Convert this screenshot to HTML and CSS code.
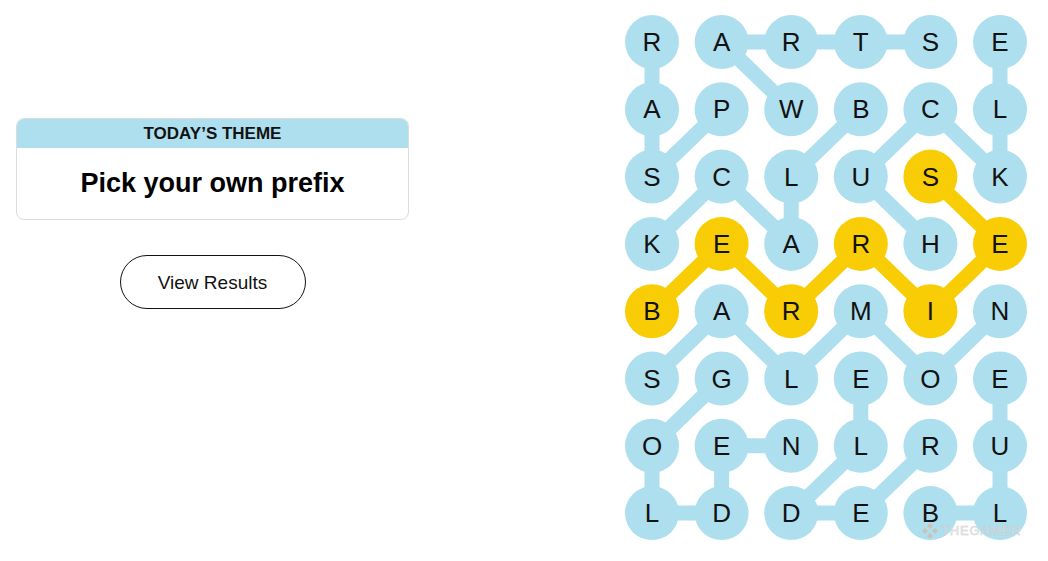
FILE: index.html
```html
<!DOCTYPE html>
<html lang="en">
<head>
<meta charset="utf-8">
<title>Strands</title>
<link rel="stylesheet" href="styles.css">
</head>
<body>
<main class="page">
  <section class="side">
    <div class="theme-card">
      <div class="theme-head">TODAY’S THEME</div>
      <div class="theme-body">Pick your own prefix</div>
    </div>
    <button class="results-btn" type="button">View Results</button>
  </section>
  <section class="board">
    <svg class="grid" width="404" height="540" viewBox="0 0 404 540" xmlns="http://www.w3.org/2000/svg">
      <g class="links">
        <polyline points="305.4,27 235.8,27 166.2,27 96.6,27 166.2,94.3"/>
        <polyline points="27,27 27,94.3 27,161.6 96.6,94.3"/>
        <polyline points="235.8,94.3 166.2,161.6 166.2,228.9 96.6,161.6 27,228.9"/>
        <polyline points="305.4,228.9 235.8,161.6 305.4,94.3 375,161.6 375,94.3 375,27"/>
        <polyline points="27,363.5 96.6,296.2 166.2,363.5 235.8,296.2 305.4,363.5 375,296.2"/>
        <polyline points="96.6,363.5 27,430.8 27,498.1 96.6,498.1 96.6,430.8 166.2,430.8"/>
        <polyline points="235.8,363.5 235.8,430.8 166.2,498.1 235.8,498.1 305.4,430.8"/>
        <polyline points="305.4,498.1 375,498.1 375,430.8 375,363.5"/>
        <polyline class="span" points="27,296.2 96.6,228.9 166.2,296.2 235.8,228.9 305.4,296.2 375,228.9 305.4,161.6"/>
      </g>
      <g class="dots">
        <circle cx="27" cy="27" r="27"/><circle cx="96.6" cy="27" r="27"/><circle cx="166.2" cy="27" r="27"/><circle cx="235.8" cy="27" r="27"/><circle cx="305.4" cy="27" r="27"/><circle cx="375" cy="27" r="27"/>
        <circle cx="27" cy="94.3" r="27"/><circle cx="96.6" cy="94.3" r="27"/><circle cx="166.2" cy="94.3" r="27"/><circle cx="235.8" cy="94.3" r="27"/><circle cx="305.4" cy="94.3" r="27"/><circle cx="375" cy="94.3" r="27"/>
        <circle cx="27" cy="161.6" r="27"/><circle cx="96.6" cy="161.6" r="27"/><circle cx="166.2" cy="161.6" r="27"/><circle cx="235.8" cy="161.6" r="27"/><circle class="span" cx="305.4" cy="161.6" r="27"/><circle cx="375" cy="161.6" r="27"/>
        <circle cx="27" cy="228.9" r="27"/><circle class="span" cx="96.6" cy="228.9" r="27"/><circle cx="166.2" cy="228.9" r="27"/><circle class="span" cx="235.8" cy="228.9" r="27"/><circle cx="305.4" cy="228.9" r="27"/><circle class="span" cx="375" cy="228.9" r="27"/>
        <circle class="span" cx="27" cy="296.2" r="27"/><circle cx="96.6" cy="296.2" r="27"/><circle class="span" cx="166.2" cy="296.2" r="27"/><circle cx="235.8" cy="296.2" r="27"/><circle class="span" cx="305.4" cy="296.2" r="27"/><circle cx="375" cy="296.2" r="27"/>
        <circle cx="27" cy="363.5" r="27"/><circle cx="96.6" cy="363.5" r="27"/><circle cx="166.2" cy="363.5" r="27"/><circle cx="235.8" cy="363.5" r="27"/><circle cx="305.4" cy="363.5" r="27"/><circle cx="375" cy="363.5" r="27"/>
        <circle cx="27" cy="430.8" r="27"/><circle cx="96.6" cy="430.8" r="27"/><circle cx="166.2" cy="430.8" r="27"/><circle cx="235.8" cy="430.8" r="27"/><circle cx="305.4" cy="430.8" r="27"/><circle cx="375" cy="430.8" r="27"/>
        <circle cx="27" cy="498.1" r="27"/><circle cx="96.6" cy="498.1" r="27"/><circle cx="166.2" cy="498.1" r="27"/><circle cx="235.8" cy="498.1" r="27"/><circle cx="305.4" cy="498.1" r="27"/><circle cx="375" cy="498.1" r="27"/>
      </g>
      <g class="letters">
        <text x="27" y="36">R</text><text x="96.6" y="36">A</text><text x="166.2" y="36">R</text><text x="235.8" y="36">T</text><text x="305.4" y="36">S</text><text x="375" y="36">E</text>
        <text x="27" y="103.3">A</text><text x="96.6" y="103.3">P</text><text x="166.2" y="103.3">W</text><text x="235.8" y="103.3">B</text><text x="305.4" y="103.3">C</text><text x="375" y="103.3">L</text>
        <text x="27" y="170.6">S</text><text x="96.6" y="170.6">C</text><text x="166.2" y="170.6">L</text><text x="235.8" y="170.6">U</text><text x="305.4" y="170.6">S</text><text x="375" y="170.6">K</text>
        <text x="27" y="237.9">K</text><text x="96.6" y="237.9">E</text><text x="166.2" y="237.9">A</text><text x="235.8" y="237.9">R</text><text x="305.4" y="237.9">H</text><text x="375" y="237.9">E</text>
        <text x="27" y="305.2">B</text><text x="96.6" y="305.2">A</text><text x="166.2" y="305.2">R</text><text x="235.8" y="305.2">M</text><text x="305.4" y="305.2">I</text><text x="375" y="305.2">N</text>
        <text x="27" y="372.5">S</text><text x="96.6" y="372.5">G</text><text x="166.2" y="372.5">L</text><text x="235.8" y="372.5">E</text><text x="305.4" y="372.5">O</text><text x="375" y="372.5">E</text>
        <text x="27" y="439.8">O</text><text x="96.6" y="439.8">E</text><text x="166.2" y="439.8">N</text><text x="235.8" y="439.8">L</text><text x="305.4" y="439.8">R</text><text x="375" y="439.8">U</text>
        <text x="27" y="507.1">L</text><text x="96.6" y="507.1">D</text><text x="166.2" y="507.1">D</text><text x="235.8" y="507.1">E</text><text x="305.4" y="507.1">B</text><text x="375" y="507.1">L</text>
      </g>
    </svg>
    <div class="watermark">
      <svg class="wm-icon" width="20" height="18" viewBox="0 0 20 18" xmlns="http://www.w3.org/2000/svg">
        <path d="M10 1 L13 4 L10 7 L7 4 Z M5 6 L8 9 L5 12 L2 9 Z M15 6 L18 9 L15 12 L12 9 Z M10 11 L13 14 L10 17 L7 14 Z"/>
      </svg>
      <span class="wm-text">THEGAMER</span>
    </div>
  </section>
</main>
</body>
</html>
```

FILE: styles.css
```css
* { box-sizing: border-box; }

html, body {
  margin: 0;
  padding: 0;
  background: #ffffff;
}

body {
  font-family: "Liberation Sans", Arial, sans-serif;
  color: #121212;
}

.page {
  display: flex;
  align-items: flex-start;
  justify-content: space-between;
  width: 1048px;
  height: 561px;
  padding: 15px 19px 0 16px;
}

.side {
  width: 393px;
  padding-top: 103px;
  display: flex;
  flex-direction: column;
  align-items: center;
}

.theme-card {
  width: 100%;
  border: 1px solid #dcdcdc;
  border-radius: 8px;
  overflow: hidden;
}

.theme-head {
  background: #aedfee;
  height: 29px;
  line-height: 30px;
  text-align: center;
  font-weight: 700;
  font-size: 17px;
  color: #121212;
}

.theme-body {
  height: 71px;
  display: flex;
  align-items: center;
  justify-content: center;
  font-weight: 700;
  font-size: 27px;
  color: #000;
}

.results-btn {
  margin-top: 35px;
  width: 186px;
  height: 54px;
  border: 1px solid #121212;
  border-radius: 27px;
  background: #fff;
  font-family: "Liberation Sans", Arial, sans-serif;
  font-size: 19px;
  color: #121212;
  padding: 2px 0 0;
}

.board {
  position: relative;
  width: 404px;
  height: 540px;
}

.grid { display: block; }

.links polyline {
  fill: none;
  stroke: #aedfee;
  stroke-width: 15;
  stroke-linejoin: round;
  stroke-linecap: round;
}

.links polyline.span { stroke: #f8cd05; }

.dots circle { fill: #aedfee; }
.dots circle.span { fill: #f8cd05; }

.letters text {
  font-family: "Liberation Sans", Arial, sans-serif;
  font-size: 26px;
  fill: #121212;
  text-anchor: middle;
}

.watermark {
  position: absolute;
  left: 295px;
  top: 507px;
  display: flex;
  align-items: center;
  gap: 1px;
  opacity: 0.8;
}

.wm-icon path { fill: #d6b9aa; }

.wm-text {
  font-family: "Liberation Sans", Arial, sans-serif;
  font-size: 13px;
  line-height: 18px;
  letter-spacing: 0.8px;
  color: #ececec;
  -webkit-text-stroke: 0.5px #c6c6c6;
}
```
